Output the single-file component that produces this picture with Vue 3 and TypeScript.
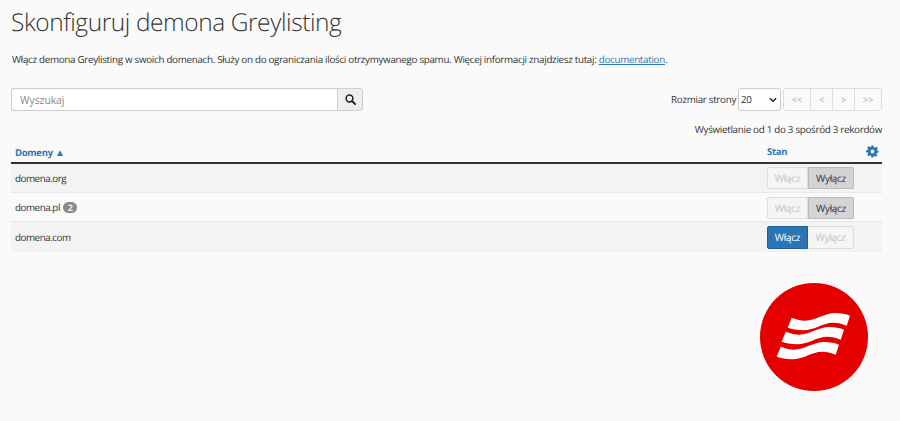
<script setup lang="ts">
interface Row {
  name: string;
  badge?: number;
  on: boolean;
}

const rows: Row[] = [
  { name: "domena.org", on: false },
  { name: "domena.pl", badge: 2, on: false },
  { name: "domena.com", on: true },
];

const pager = ["<<", "<", ">", ">>"];
const wave =
  "M31.7 34.7C37 36.5 41 37.7 45 37.7C55 37.7 65 30 75 30C81 30 86 31 90 32.7L86.7 42.7C82 41 78 39.7 73 39.7C63 39.7 55 47.2 43 47.2C37 47.2 32 46 27.7 44.7Z";
</script>

<template>
  <div class="page">
    <h1 class="title">Skonfiguruj demona Greylisting</h1>
    <p class="intro">
      Włącz demona Greylisting w swoich domenach. Służy on do ograniczania ilości
      otrzymywanego spamu. Więcej informacji znajdziesz tutaj:
      <a class="doc-link" href="#">documentation</a>.
    </p>

    <div class="toolbar">
      <div class="search">
        <input class="search-input" type="text" placeholder="Wyszukaj" />
        <button class="search-btn" type="button" aria-label="Szukaj">
          <svg width="11" height="11" viewBox="0 0 13 13">
            <circle cx="5.3" cy="5.3" r="4" fill="none" stroke="#222" stroke-width="1.8" />
            <path d="M8.3 8.3L12 12" stroke="#222" stroke-width="2.2" stroke-linecap="round" />
          </svg>
        </button>
      </div>
      <div class="paging">
        <label class="size-label">Rozmiar strony</label>
        <div class="size-select">
          <span>20</span>
          <svg width="8" height="6" viewBox="0 0 9 6">
            <path d="M1 1l3.5 3.5L8 1" fill="none" stroke="#222" stroke-width="1.6" />
          </svg>
        </div>
        <div class="pager">
          <span v-for="p in pager" :key="p" class="page-btn">{{ p }}</span>
        </div>
      </div>
    </div>

    <p class="records">Wyświetlanie od 1 do 3 spośród 3 rekordów</p>

    <div class="table">
      <div class="row head">
        <div class="col-name">Domeny <span class="sort">▲</span></div>
        <div class="col-state">Stan</div>
        <div class="col-gear">
          <svg width="13" height="13" viewBox="0 0 24 24">
            <path
              fill="#2a76b4"
              fill-rule="evenodd"
              d="M10 1h4l.6 3.1 1.9.8 2.6-1.8 2.8 2.8-1.8 2.6.8 1.9L23 10v4l-3.1.6-.8 1.9 1.8 2.6-2.8 2.8-2.6-1.8-1.9.8L14 23h-4l-.6-3.1-1.9-.8-2.6 1.8-2.8-2.8 1.8-2.6-.8-1.9L0 14v-4l3.1-.6.8-1.9-1.8-2.6 2.8-2.8 2.6 1.8 1.9-.8zM12 8.5a3.5 3.5 0 1 0 0 7 3.5 3.5 0 0 0 0-7z"
            />
          </svg>
        </div>
      </div>
      <div v-for="r in rows" :key="r.name" class="row item">
        <div class="col-name">
          {{ r.name }}
          <span v-if="r.badge" class="badge">{{ r.badge }}</span>
        </div>
        <div class="col-state">
          <div class="toggle">
            <span class="tg left" :class="{ active: r.on }">Włącz</span>
            <span class="tg right" :class="{ pressed: !r.on }">Wyłącz</span>
          </div>
        </div>
        <div class="col-gear"></div>
      </div>
    </div>

    <svg class="logo" width="108" height="108" viewBox="0 0 108 108">
      <circle cx="54" cy="54" r="54" fill="#e50000" />
      <path fill="#fff" :d="wave" />
      <path fill="#fff" :d="wave" transform="translate(-6 14)" />
      <path fill="#fff" :d="wave" transform="translate(-11 29)" />
    </svg>
  </div>
</template>

<style>
html,
body {
  margin: 0;
  background: #fafafa;
}
</style>

<style scoped>
.page {
  position: relative;
  box-sizing: border-box;
  width: 900px;
  height: 421px;
  padding: 0 18px 0 11px;
  overflow: hidden;
  background: #fafafa;
  color: #333;
  font-family: "Open Sans", sans-serif;
  font-size: 9.8px;
  letter-spacing: -0.29px;
  text-rendering: geometricPrecision;
}
.title {
  margin: 0;
  padding-top: 5px;
  height: 39px;
  box-sizing: border-box;
  font-size: 24.5px;
  letter-spacing: -0.43px;
  line-height: 36px;
  font-weight: 300;
}
.intro {
  margin: 13px 0 0 1px;
  line-height: 15px;
}
.doc-link {
  color: #2a76b4;
}
.toolbar {
  display: flex;
  justify-content: space-between;
  align-items: center;
  margin-top: 21px;
  height: 23px;
}
.search {
  display: flex;
  width: 352px;
  height: 23px;
}
.search-input {
  flex: 1;
  min-width: 0;
  box-sizing: border-box;
  padding: 0 8px;
  border: 1px solid #ccc;
  border-right: 0;
  border-radius: 3px 0 0 3px;
  background: #fff;
  font-family: "Open Sans", sans-serif;
  font-size: 10.3px;
}
.search-input::placeholder {
  color: #888;
  opacity: 1;
}
.search-btn {
  display: flex;
  align-items: center;
  justify-content: center;
  width: 26px;
  padding: 0;
  border: 1px solid #ccc;
  border-radius: 0 3px 3px 0;
  background: #eee;
}
.paging {
  display: flex;
  align-items: center;
}
.size-select {
  display: flex;
  align-items: center;
  justify-content: space-between;
  box-sizing: border-box;
  width: 43px;
  height: 23px;
  margin-left: 2px;
  padding: 0 3px 0 2px;
  border: 1px solid #ccc;
  border-radius: 3px;
  background: #fff;
}
.pager {
  display: flex;
  box-sizing: border-box;
  height: 23px;
  margin-left: 2px;
  border: 1px solid #ddd;
  border-radius: 3px;
}
.page-btn {
  display: flex;
  align-items: center;
  justify-content: center;
  box-sizing: border-box;
  width: 22px;
  border-left: 1px solid #ddd;
  color: #aaa;
  font-size: 9.5px;
}
.page-btn:first-child {
  width: 26px;
  border-left: 0;
}
.page-btn:last-child {
  width: 27px;
}
.records {
  margin: 11px 0 0;
  text-align: right;
  line-height: 15px;
}
.table {
  margin-top: 4px;
}
.row {
  display: flex;
  align-items: center;
}
.head {
  height: 21px;
  border-bottom: 2px solid #333;
  color: #2a76b4;
  font-size: 9.5px;
  font-weight: 700;
}
.item {
  height: 28px;
  border-bottom: 1px solid #e9e9e9;
  letter-spacing: -0.45px;
}
.item:nth-child(even) {
  background: #f3f3f3;
}
.item:nth-child(3) .toggle {
  margin-top: 2px;
}
.item:last-child {
  height: 30px;
  border-bottom: 0;
}
.item:last-child .toggle {
  height: 23px;
}
.col-name {
  flex: 1;
  padding-left: 4px;
}
.col-state {
  width: 87px;
}
.col-gear {
  display: flex;
  justify-content: flex-end;
  box-sizing: border-box;
  width: 28px;
  padding-right: 3px;
}
.sort {
  font-size: 10px;
  letter-spacing: 0;
}
.badge {
  display: inline-block;
  min-width: 14px;
  height: 11px;
  margin-left: 1px;
  border-radius: 6px;
  background: #8a8a8a;
  color: #eee;
  font-size: 9px;
  font-weight: 700;
  line-height: 11px;
  text-align: center;
}
.toggle {
  display: flex;
  width: 87px;
  height: 22px;
}
.tg {
  display: flex;
  align-items: center;
  justify-content: center;
  box-sizing: border-box;
  border: 1px solid #ddd;
  background: #f5f5f5;
  color: #c4c4c4;
  font-size: 10px;
  letter-spacing: -0.3px;
}
.left {
  width: 41px;
  border-radius: 2px 0 0 2px;
}
.right {
  width: 46px;
  border-left: 0;
  border-radius: 0 2px 2px 0;
}
.active {
  border-color: #1f5f95;
  background: #2a76b4;
  color: #fff;
}
.pressed {
  border: 1px solid #bbb;
  background: #d4d4d4;
  color: #333;
}
.logo {
  position: absolute;
  left: 760px;
  top: 283px;
}
</style>
